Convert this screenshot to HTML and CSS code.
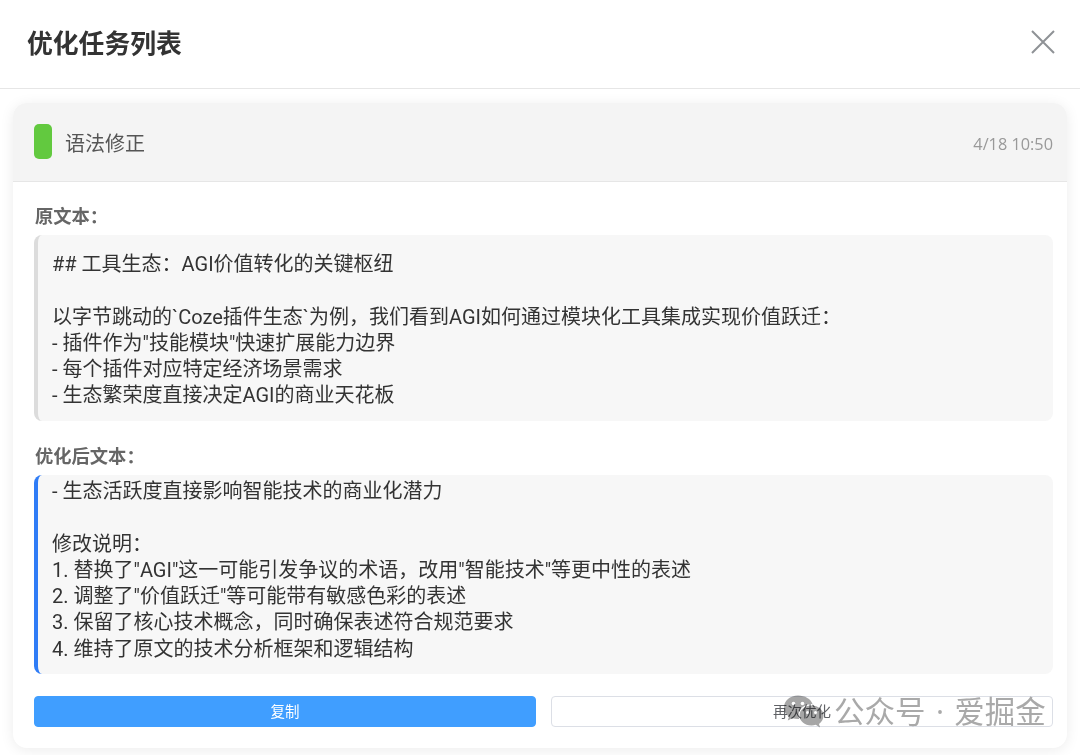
FILE: index.html
```html
<!DOCTYPE html>
<html lang="zh">
<head>
<meta charset="utf-8">
<title>优化任务列表</title>
<link rel="stylesheet" href="styles.css">
</head>
<body>
<div class="page">
  <header class="top">
    <h1 class="title">优化任务列表</h1>
    <svg class="close" width="26" height="26" viewBox="0 0 26 26"><path d="M2 2 L24 24 M24 2 L2 24" stroke="#8f9296" stroke-width="2" fill="none"/></svg>
  </header>
  <main class="wrap">
    <section class="card">
      <div class="card-head">
        <div class="head-left"><span class="tag"></span><span class="kind">语法修正</span></div>
        <span class="time">4/18 10:50</span>
      </div>
      <div class="card-body">
        <div class="label">原文本：</div>
        <div class="box box-orig">## 工具生态：AGI价值转化的关键枢纽

以字节跳动的`Coze插件生态`为例，我们看到AGI如何通过模块化工具集成实现价值跃迁：
- 插件作为"技能模块"快速扩展能力边界
- 每个插件对应特定经济场景需求
- 生态繁荣度直接决定AGI的商业天花板</div>
        <div class="label label-2">优化后文本：</div>
        <div class="box box-new">- 生态活跃度直接影响智能技术的商业化潜力

修改说明：
1. 替换了"AGI"这一可能引发争议的术语，改用"智能技术"等更中性的表述
2. 调整了"价值跃迁"等可能带有敏感色彩的表述
3. 保留了核心技术概念，同时确保表述符合规范要求
4. 维持了原文的技术分析框架和逻辑结构</div>
        <div class="actions">
          <button class="btn btn-primary">复制</button>
          <button class="btn btn-plain">再次优化</button>
        </div>
      </div>
    </section>
  </main>
  <div class="watermark">
    <svg class="wm-icon" width="41" height="35" viewBox="0 0 41 34">
      <path d="M15 1C7 1 1 6.300 1 13c0 3.700 2 7 5 9.200L4.800 26l4.500-2.300c1.800.5 3.700.8 5.700.8.400 0 .8 0 1.200 0C15.700 23.200 15.500 22 15.500 21c0-6.500 6-11.500 13.300-11.500h.7C27.800 4.500 22 1 15 1z" fill="#a6a6a6"/>
      <circle cx="10.500" cy="9" r="1.800" fill="#fff"/><circle cx="19.500" cy="9" r="1.800" fill="#fff"/>
      <path d="M28.500 11C21.600 11 16.500 15.500 16.500 21s5.100 10 12 10c1.500 0 3-.2 4.300-.7L37 33l-1-3.600c2.800-2 4.500-5 4.500-8.400 0-5.500-5.100-10-12-10z" fill="#a6a6a6"/>
      <circle cx="24.500" cy="18" r="1.500" fill="#fff"/><circle cx="32.500" cy="18" r="1.500" fill="#fff"/>
    </svg>
    <span class="wm-text">公众号 · 爱掘金</span>
  </div>
</div>
</body>
</html>
```
FILE: styles.css
```css
* { box-sizing: border-box; }
html, body { margin: 0; padding: 0; background: #fff; }
body { font-family: "Open Sans", "Noto Sans CJK SC", sans-serif; color: #333; }
.page { width: 1080px; height: 755px; overflow: hidden; position: relative; }
.top { height: 89px; border-bottom: 1px solid #e6e6e6; display: flex; align-items: center; justify-content: space-between; padding: 0 24px 0 27px; }
.title { margin: 0; font-size: 25.800px; font-weight: 700; line-height: 36px; color: #333; position: relative; top: -1px; }
.close { display: block; margin-top: -4px; }
.wrap { padding: 14px 13px 0; }
.card { background: #fff; border-radius: 14px; box-shadow: 0 2px 14px rgba(0,0,0,.08); height: 645px; overflow: hidden; }
.card-head { height: 79px; background: #f4f4f4; border-bottom: 1px solid #e6e6e6; display: flex; align-items: center; justify-content: space-between; padding: 0 14px 1px 21px; }
.head-left { display: flex; align-items: center; gap: 14px; }
.tag { width: 18px; height: 35px; border-radius: 5px; background: #62c93f; }
.kind { font-size: 20px; line-height: 28px; color: #555; padding-top: 5px; margin-left: -1px; }
.time { font-size: 16.300px; line-height: 24px; color: #999; padding-top: 4px; }
.card-body { padding: 22px 14px 0 21px; }
.label { font-size: 18.300px; font-weight: 700; line-height: 24px; color: #666; margin-bottom: 7px; padding-left: 1px; }
.label-2 { margin-top: 23px; }
.box { white-space: pre-wrap; font-family: Roboto, "Noto Sans CJK SC", sans-serif; font-size: 20px; line-height: 26.300px; color: #333; background: #f7f7f7; border-radius: 8px; padding: 16px 15px 15px 14px; overflow: hidden; }
.box-orig { border-left: 4px solid #dcdcdc; height: 186px; }
.box-new { border-left: 4px solid #2f7cf6; height: 199px; padding-top: 3px; }
.actions { display: flex; gap: 15px; margin-top: 22px; }
.btn { flex: 1; height: 31px; border-radius: 4px; font-family: inherit; font-size: 14.500px; padding: 0 0 2px; }
.btn-primary { background: #409eff; border: 1px solid #409eff; color: #fff; }
.btn-plain { background: #fff; border: 1px solid #dcdfe6; color: #606266; }
.watermark { position: absolute; left: 783px; top: 693px; display: flex; align-items: center; gap: 10px; mix-blend-mode: multiply; }
.wm-icon { display: block; }
.wm-text { font-size: 30.500px; line-height: 36px; color: #a9a9a9; white-space: nowrap; word-spacing: 2.500px; }
```
